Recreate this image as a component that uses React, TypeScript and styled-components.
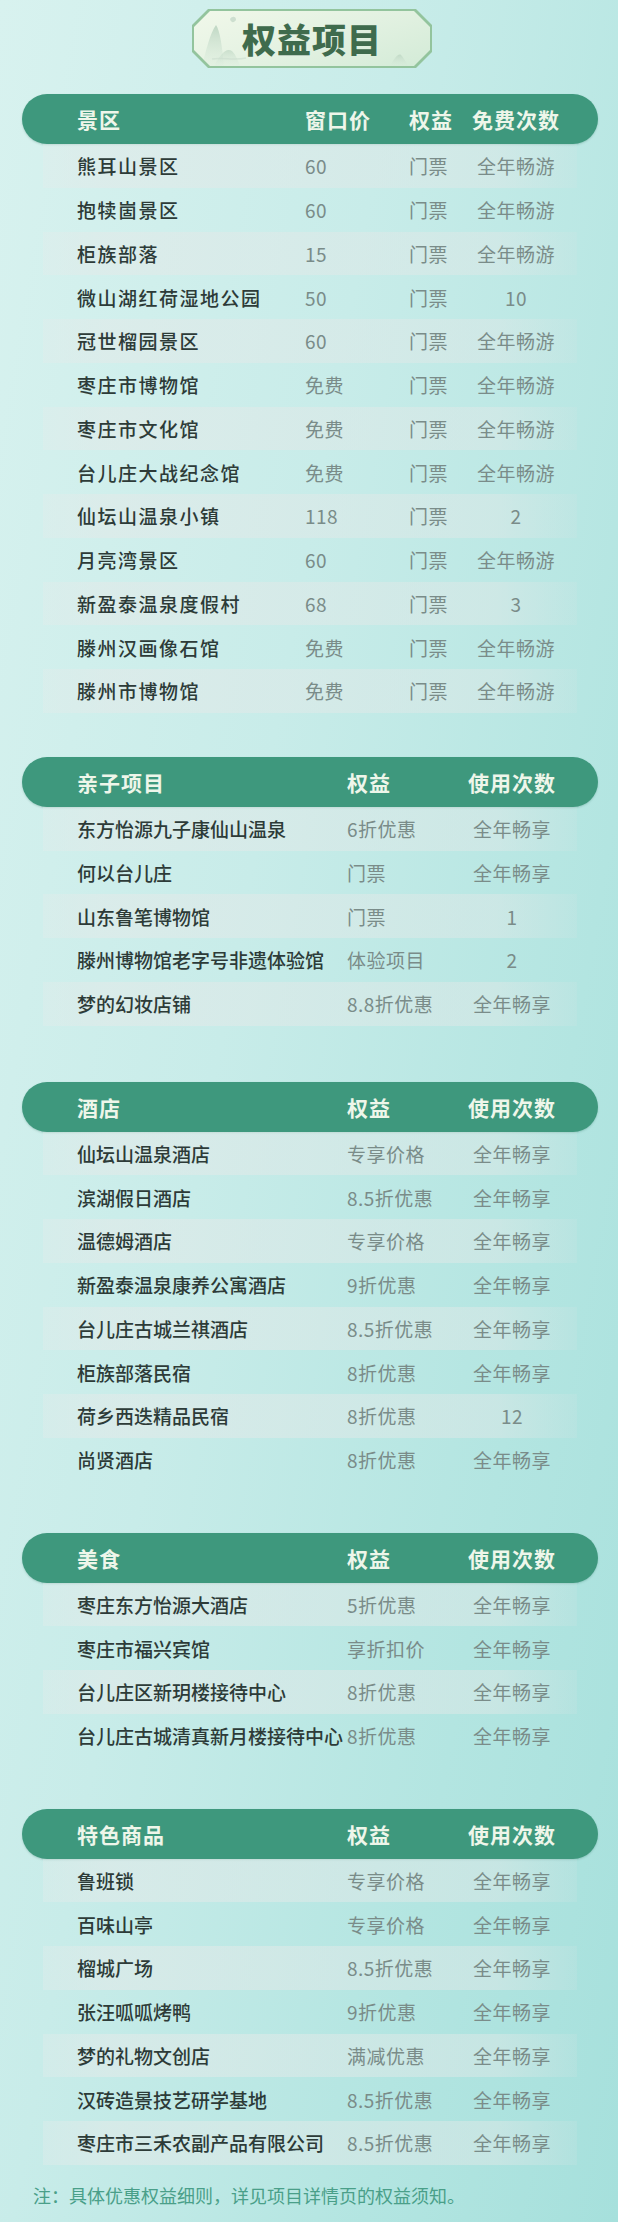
import React from "react";
import styled, { createGlobalStyle } from "styled-components";

const GlobalStyle = createGlobalStyle`
  html, body {
    margin: 0;
    padding: 0;
  }
  body {
    font-family: "Noto Sans CJK SC", "Noto Sans", sans-serif;
  }
`;

const Page = styled.div`
  width: 618px;
  min-height: 2222px;
  box-sizing: border-box;
  padding-top: 9px;
  background: linear-gradient(100deg, #d8f2ef 0%, #c8ece9 40%, #b3e5e1 75%, #a6e0dc 100%);
  overflow: hidden;
`;

const TitleRow = styled.div`
  display: flex;
  justify-content: center;
`;

const octagon = `polygon(16px 0, calc(100% - 16px) 0, 100% 16px, 100% calc(100% - 16px), calc(100% - 16px) 100%, 16px 100%, 0 calc(100% - 16px), 0 16px)`;

const Badge = styled.div`
  position: relative;
  width: 240px;
  height: 59px;
  box-sizing: border-box;
  padding: 2px;
  margin-left: 6px;
  background: #93c49d;
  clip-path: ${octagon};
`;

const BadgeInner = styled.div`
  position: relative;
  width: 100%;
  height: 100%;
  display: flex;
  align-items: center;
  justify-content: center;
  background: linear-gradient(160deg, #f1f8ea 0%, #e2f1e1 55%, #d3ebd7 100%);
  clip-path: ${octagon};
`;

const BadgeArt = styled.svg`
  position: absolute;
  left: 0;
  top: 0;
  width: 100%;
  height: 100%;
`;

const Title = styled.h1`
  position: relative;
  margin: 0;
  font-size: 34px;
  font-weight: 900;
  letter-spacing: 1px;
  color: #3f6b4d;
  line-height: 1;
`;

const Section = styled.section<{ $space: number }>`
  margin-top: ${(p) => p.$space}px;
`;

const HeaderBar = styled.div<{ $cols: string }>`
  display: grid;
  grid-template-columns: ${(p) => p.$cols};
  align-items: center;
  height: 50px;
  margin: 0 20px 0 22px;
  padding-left: 55px;
  border-radius: 25px;
  background: #3e987d;
  box-shadow: 0 1px 2px rgba(40, 110, 90, 0.25);
`;

const HeadCell = styled.div<{ $center?: boolean }>`
  font-size: 21px;
  font-weight: 700;
  letter-spacing: 1px;
  color: #eef6ea;
  white-space: nowrap;
  text-align: ${(p) => (p.$center ? "center" : "left")};
`;

const Row = styled.div<{ $cols: string; $band: boolean }>`
  display: grid;
  grid-template-columns: ${(p) => p.$cols};
  align-items: center;
  height: 43.75px;
  margin: 0 41px 0 43px;
  padding-left: 34px;
  background: ${(p) =>
    p.$band
      ? "linear-gradient(90deg, rgba(228,236,235,0.35) 0%, rgba(226,234,233,0.6) 12%, rgba(222,232,231,0.5) 85%, rgba(210,228,228,0.2) 100%)"
      : "transparent"};
`;

const Name = styled.div<{ $spaced?: boolean }>`
  font-size: 19px;
  font-weight: 500;
  color: #2d3b38;
  white-space: nowrap;
  letter-spacing: ${(p) => (p.$spaced ? "1.5px" : "0")};
`;

const Value = styled.div<{ $center?: boolean }>`
  font-size: 19px;
  font-weight: 400;
  color: #7a8c89;
  white-space: nowrap;
  letter-spacing: 0.5px;
  text-align: ${(p) => (p.$center ? "center" : "left")};
`;

const Note = styled.p`
  margin: 19px 0 0 33px;
  font-size: 18px;
  line-height: 22px;
  color: #4a9f89;
  white-space: nowrap;
`;

type Table = {
  heads: string[];
  cols: string;
  space: number;
  spaced?: boolean;
  rows: string[][];
};

const scenicCols = "228px 104px 63px 88px";
const shareCols = "270px 121px 88px";

const tables: Table[] = [
  {
    heads: ["景区", "窗口价", "权益", "免费次数"],
    cols: scenicCols,
    space: 26,
    spaced: true,
    rows: [
      ["熊耳山景区", "60", "门票", "全年畅游"],
      ["抱犊崮景区", "60", "门票", "全年畅游"],
      ["柜族部落", "15", "门票", "全年畅游"],
      ["微山湖红荷湿地公园", "50", "门票", "10"],
      ["冠世榴园景区", "60", "门票", "全年畅游"],
      ["枣庄市博物馆", "免费", "门票", "全年畅游"],
      ["枣庄市文化馆", "免费", "门票", "全年畅游"],
      ["台儿庄大战纪念馆", "免费", "门票", "全年畅游"],
      ["仙坛山温泉小镇", "118", "门票", "2"],
      ["月亮湾景区", "60", "门票", "全年畅游"],
      ["新盈泰温泉度假村", "68", "门票", "3"],
      ["滕州汉画像石馆", "免费", "门票", "全年畅游"],
      ["滕州市博物馆", "免费", "门票", "全年畅游"],
    ],
  },
  {
    heads: ["亲子项目", "权益", "使用次数"],
    cols: shareCols,
    space: 44,
    rows: [
      ["东方怡源九子康仙山温泉", "6折优惠", "全年畅享"],
      ["何以台儿庄", "门票", "全年畅享"],
      ["山东鲁笔博物馆", "门票", "1"],
      ["滕州博物馆老字号非遗体验馆", "体验项目", "2"],
      ["梦的幻妆店铺", "8.8折优惠", "全年畅享"],
    ],
  },
  {
    heads: ["酒店", "权益", "使用次数"],
    cols: shareCols,
    space: 56,
    rows: [
      ["仙坛山温泉酒店", "专享价格", "全年畅享"],
      ["滨湖假日酒店", "8.5折优惠", "全年畅享"],
      ["温德姆酒店", "专享价格", "全年畅享"],
      ["新盈泰温泉康养公寓酒店", "9折优惠", "全年畅享"],
      ["台儿庄古城兰祺酒店", "8.5折优惠", "全年畅享"],
      ["柜族部落民宿", "8折优惠", "全年畅享"],
      ["荷乡西迭精品民宿", "8折优惠", "12"],
      ["尚贤酒店", "8折优惠", "全年畅享"],
    ],
  },
  {
    heads: ["美食", "权益", "使用次数"],
    cols: shareCols,
    space: 51,
    rows: [
      ["枣庄东方怡源大酒店", "5折优惠", "全年畅享"],
      ["枣庄市福兴宾馆", "享折扣价", "全年畅享"],
      ["台儿庄区新玥楼接待中心", "8折优惠", "全年畅享"],
      ["台儿庄古城清真新月楼接待中心", "8折优惠", "全年畅享"],
    ],
  },
  {
    heads: ["特色商品", "权益", "使用次数"],
    cols: shareCols,
    space: 51,
    rows: [
      ["鲁班锁", "专享价格", "全年畅享"],
      ["百味山亭", "专享价格", "全年畅享"],
      ["榴城广场", "8.5折优惠", "全年畅享"],
      ["张汪呱呱烤鸭", "9折优惠", "全年畅享"],
      ["梦的礼物文创店", "满减优惠", "全年畅享"],
      ["汉砖造景技艺研学基地", "8.5折优惠", "全年畅享"],
      ["枣庄市三禾农副产品有限公司", "8.5折优惠", "全年畅享"],
    ],
  },
];

const Mountains = () => (
  <BadgeArt viewBox="0 0 236 55" preserveAspectRatio="none">
    <defs>
      <linearGradient id="mt" x1="0" y1="0" x2="0" y2="1">
        <stop offset="0" stopColor="#b9d3bf" stopOpacity="0.9" />
        <stop offset="1" stopColor="#d8eadb" stopOpacity="0.2" />
      </linearGradient>
    </defs>
    <path d="M8 55 C12 40 16 22 22 14 C26 20 28 34 30 55 Z" fill="url(#mt)" />
    <path d="M20 55 C26 44 32 36 38 40 C42 44 44 50 46 55 Z" fill="url(#mt)" opacity="0.7" />
    <path d="M36 8 C38 5 42 5 42 9 C40 12 37 12 36 8 Z" fill="#c5d9c9" opacity="0.8" />
    <path d="M196 55 C200 48 204 42 207 44 C210 47 212 51 214 55 Z" fill="url(#mt)" opacity="0.8" />
    <path d="M18 48 C30 46 40 50 52 47" stroke="#c9dccd" strokeWidth="1.5" fill="none" opacity="0.6" />
  </BadgeArt>
);

export default function App() {
  return (
    <Page>
      <GlobalStyle />
      <TitleRow>
        <Badge>
          <BadgeInner>
            <Mountains />
            <Title>权益项目</Title>
          </BadgeInner>
        </Badge>
      </TitleRow>

      {tables.map((t) => (
        <Section key={t.heads[0]} $space={t.space}>
          <HeaderBar $cols={t.cols}>
            {t.heads.map((h, i) => (
              <HeadCell key={h} $center={i === t.heads.length - 1}>
                {h}
              </HeadCell>
            ))}
          </HeaderBar>
          {t.rows.map((r, ri) => (
            <Row key={r[0]} $cols={t.cols} $band={ri % 2 === 0}>
              <Name $spaced={t.spaced}>{r[0]}</Name>
              {r.slice(1).map((v, vi) => (
                <Value key={vi} $center={vi === r.length - 2}>
                  {v}
                </Value>
              ))}
            </Row>
          ))}
        </Section>
      ))}

      <Note>注：具体优惠权益细则，详见项目详情页的权益须知。</Note>
    </Page>
  );
}
